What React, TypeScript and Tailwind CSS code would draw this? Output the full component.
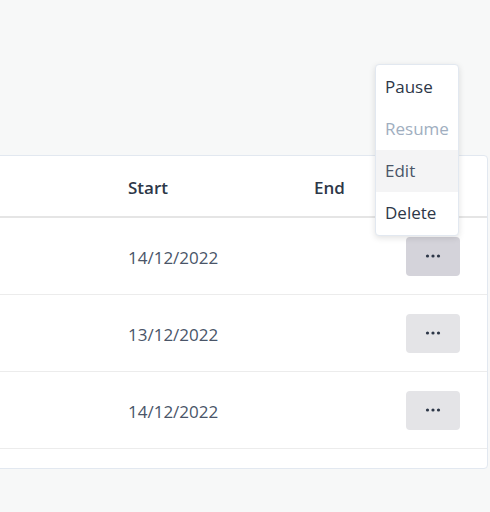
import React from 'react';

const rows = [
  { id: 1, start: '14/12/2022', end: '', open: true },
  { id: 2, start: '13/12/2022', end: '', open: false },
  { id: 3, start: '14/12/2022', end: '', open: false },
];

const Dots: React.FC = () => (
  <svg width="16" height="4" viewBox="0 0 16 4" fill="#2d3748">
    <circle cx="2.5" cy="2" r="1.6" />
    <circle cx="8" cy="2" r="1.6" />
    <circle cx="13.5" cy="2" r="1.6" />
  </svg>
);

const ActionMenu: React.FC = () => (
  <div className="absolute bottom-[calc(100%+1px)] right-px w-[84px] bg-white rounded-[4px] border border-[#e2e8f0] shadow-[0_2px_6px_rgba(0,0,0,0.12)] py-px z-10">
    <div className="h-[42px] flex items-center px-[9px] text-[#2d3748]">Pause</div>
    <div className="h-[42px] flex items-center px-[9px] text-[#a0aec0]">Resume</div>
    <div className="h-[42px] flex items-center px-[9px] text-[#4a5568] bg-[#f4f4f5]">Edit</div>
    <div className="h-[42px] flex items-center px-[9px] text-[#2d3748]">Delete</div>
  </div>
);

export default function App() {
  return (
    <div
      className="w-[490px] h-[512px] bg-[#f7f8f8] overflow-hidden flex flex-col items-end pt-[155px]"
      style={{ fontFamily: '"Open Sans", "Liberation Sans", sans-serif' }}
    >
      <div className="w-[700px] shrink-0 mr-[2px] bg-white border border-[#e2e8f0] rounded-[4px] pb-[19px] text-[17px]">
        {/* header */}
        <div className="grid grid-cols-[323px_186px_92px_97px] h-[62px] items-center border-b-2 border-[#e5e5e5] font-semibold text-[#2d3748]">
          <div className="px-4 pt-1">Name</div>
          <div className="px-4 pt-1">Start</div>
          <div className="px-4 pt-1">End</div>
          <div />
        </div>
        {rows.map((r) => (
          <div
            key={r.id}
            className="grid grid-cols-[323px_186px_92px_97px] h-[77px] items-center border-b border-[#ececec] text-[#4a5568]"
          >
            <div className="px-4 pt-1">Campaign {r.id}</div>
            <div className="px-4 pt-1">{r.start}</div>
            <div className="px-4 pt-1">{r.end}</div>
            <div className="pl-4 pr-[27px]">
              <div className="relative w-[54px]">
                {r.open && <ActionMenu />}
                <button
                  className={`w-[54px] h-[39px] rounded-[4px] flex items-center justify-center ${
                    r.open ? 'bg-[#d4d3da]' : 'bg-[#e4e4e7]'
                  }`}
                >
                  <Dots />
                </button>
              </div>
            </div>
          </div>
        ))}
      </div>
    </div>
  );
}
